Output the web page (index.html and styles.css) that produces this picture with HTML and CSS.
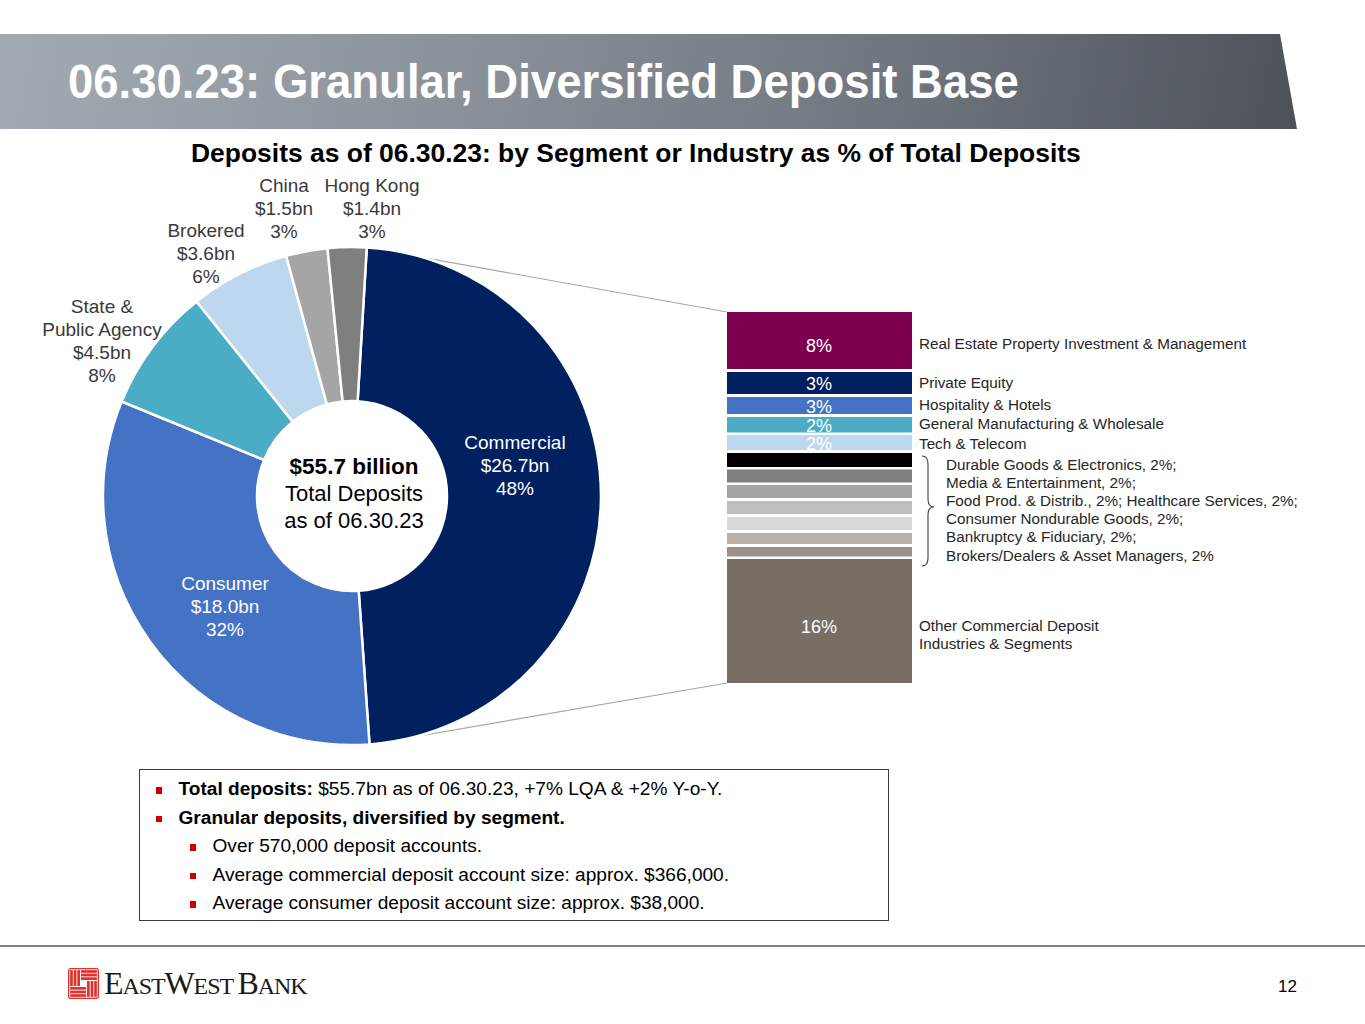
FILE: index.html
```html
<!DOCTYPE html>
<html lang="en">
<head>
<meta charset="utf-8">
<title>06.30.23: Granular, Diversified Deposit Base</title>
<link rel="stylesheet" href="styles.css">
</head>
<body>
<div class="slide">
  <header class="titlebar">
    <h1 class="title">06.30.23: Granular, Diversified Deposit Base</h1>
  </header>
  <h2 class="subtitle">Deposits as of 06.30.23: by Segment or Industry as % of Total Deposits</h2>

  <svg class="chart" width="1365" height="592" viewBox="0 169 1365 592" xmlns="http://www.w3.org/2000/svg">
    <!-- connectors -->
    <line class="conn" x1="367" y1="247.5" x2="727" y2="312"/>
    <line class="conn" x1="369.5" y1="744.5" x2="727" y2="683"/>

    <!-- donut -->
    <g class="donut">
      <path fill="#002060" d="M 366.77 247.44 A 249 249 0 0 1 369.50 744.38 L 358.68 590.77 A 95 95 0 0 0 357.63 401.17 Z"/>
      <path fill="#4472C4" d="M 369.50 744.38 A 249 249 0 0 1 121.63 401.47 L 264.11 459.94 A 95 95 0 0 0 358.68 590.77 Z"/>
      <path fill="#4BACC6" d="M 121.63 401.47 A 249 249 0 0 1 196.60 301.45 L 292.71 421.77 A 95 95 0 0 0 264.11 459.94 Z"/>
      <path fill="#BDD7EE" d="M 196.60 301.45 A 249 249 0 0 1 286.13 255.87 L 326.87 404.38 A 95 95 0 0 0 292.71 421.77 Z"/>
      <path fill="#A5A5A5" d="M 286.13 255.87 A 249 249 0 0 1 327.49 248.21 L 342.65 401.46 A 95 95 0 0 0 326.87 404.38 Z"/>
      <path fill="#7F7F7F" d="M 327.49 248.21 A 249 249 0 0 1 366.77 247.44 L 357.63 401.17 A 95 95 0 0 0 342.65 401.46 Z"/>
    </g>

    <!-- donut outer labels -->
    <g class="lbl-out">
      <text x="284" y="192">China</text>
      <text x="284" y="215">$1.5bn</text>
      <text x="284" y="238">3%</text>
      <text x="372" y="192">Hong Kong</text>
      <text x="372" y="215">$1.4bn</text>
      <text x="372" y="238">3%</text>
      <text x="206" y="237">Brokered</text>
      <text x="206" y="260">$3.6bn</text>
      <text x="206" y="283">6%</text>
      <text x="102" y="313">State &amp;</text>
      <text x="102" y="336">Public Agency</text>
      <text x="102" y="359">$4.5bn</text>
      <text x="102" y="382">8%</text>
    </g>
    <g class="lbl-in">
      <text x="515" y="449">Commercial</text>
      <text x="515" y="472">$26.7bn</text>
      <text x="515" y="495">48%</text>
      <text x="225" y="590">Consumer</text>
      <text x="225" y="613">$18.0bn</text>
      <text x="225" y="636">32%</text>
    </g>
    <g class="lbl-center">
      <text class="b" x="354" y="474">$55.7 billion</text>
      <text x="354" y="501">Total Deposits</text>
      <text x="354" y="528">as of 06.30.23</text>
    </g>

    <!-- stacked bar -->
    <g class="bar">
      <rect x="727" y="312" width="185" height="57" fill="#7D0050"/>
      <rect x="727" y="372" width="185" height="22" fill="#002060"/>
      <rect x="727" y="397" width="185" height="17" fill="#4472C4"/>
      <rect x="727" y="417" width="185" height="15.5" fill="#4BACC6"/>
      <rect x="727" y="435" width="185" height="15" fill="#BDD7EE"/>
      <rect x="727" y="453" width="185" height="14" fill="#000000"/>
      <rect x="727" y="469.5" width="185" height="13" fill="#7F7F7F"/>
      <rect x="727" y="485" width="185" height="13" fill="#A5A5A5"/>
      <rect x="727" y="501" width="185" height="13" fill="#BFBFBF"/>
      <rect x="727" y="517" width="185" height="13" fill="#D9D9D9"/>
      <rect x="727" y="533" width="185" height="11" fill="#B8B0A9"/>
      <rect x="727" y="547" width="185" height="9.5" fill="#9C9188"/>
      <rect x="727" y="559" width="185" height="124" fill="#776E64"/>
    </g>
    <g class="lbl-bar">
      <text x="819" y="351.5">8%</text>
      <text x="819" y="389.5">3%</text>
      <text x="819" y="412.5">3%</text>
      <text x="819" y="431.5">2%</text>
      <text x="819" y="449.5">2%</text>
      <text x="819" y="632.5">16%</text>
    </g>
    <g class="lbl-ind">
      <text x="919" y="349.4">Real Estate Property Investment &amp; Management</text>
      <text x="919" y="388.4">Private Equity</text>
      <text x="919" y="410.4">Hospitality &amp; Hotels</text>
      <text x="919" y="429.4">General Manufacturing &amp; Wholesale</text>
      <text x="919" y="449.4">Tech &amp; Telecom</text>
      <text x="946" y="470.4">Durable Goods &amp; Electronics, 2%;</text>
      <text x="946" y="488.4">Media &amp; Entertainment, 2%;</text>
      <text x="946" y="506.4">Food Prod. &amp; Distrib., 2%; Healthcare Services, 2%;</text>
      <text x="946" y="524.4">Consumer Nondurable Goods, 2%;</text>
      <text x="946" y="542.4">Bankruptcy &amp; Fiduciary, 2%;</text>
      <text x="946" y="561.4">Brokers/Dealers &amp; Asset Managers, 2%</text>
      <text x="919" y="631.4">Other Commercial Deposit</text>
      <text x="919" y="649.4">Industries &amp; Segments</text>
    </g>
    <path class="brace" d="M 922 456 Q 928 456 928 464 L 928 499 Q 928 507 934 507 Q 928 507 928 515 L 928 558 Q 928 566 922 566"/>
  </svg>

  <div class="notes">
    <ul class="list">
      <li class="l1"><span class="t"><b>Total deposits:</b> $55.7bn as of 06.30.23, +7% LQA &amp; +2% Y-o-Y.</span></li>
      <li class="l1"><span class="t"><b>Granular deposits, diversified by segment.</b></span></li>
      <li class="l2"><span class="t">Over 570,000 deposit accounts.</span></li>
      <li class="l2"><span class="t">Average commercial deposit account size: approx. $366,000.</span></li>
      <li class="l2"><span class="t">Average consumer deposit account size: approx. $38,000.</span></li>
    </ul>
  </div>

  <footer class="footer">
    <div class="brand">
      <svg class="logo" width="31" height="31" viewBox="0 0 32 32" xmlns="http://www.w3.org/2000/svg">
        <rect x="0" y="0" width="32" height="32" rx="3" fill="#E0302C"/>
        <rect x="1.3" y="1.3" width="29.4" height="29.4" rx="1.5" fill="#ffffff"/>
        <g fill="#E0302C">
          <rect x="2.2" y="2.2" width="2.8" height="16.4"/>
          <rect x="5.9" y="2.2" width="2.8" height="16.4"/>
          <rect x="9.6" y="2.2" width="2.8" height="16.4"/>
          <rect x="13.4" y="2.2" width="16.4" height="2.8"/>
          <rect x="13.4" y="5.9" width="16.4" height="2.8"/>
          <rect x="13.4" y="9.6" width="16.4" height="2.8"/>
          <rect x="19.6" y="13.4" width="2.8" height="16.4"/>
          <rect x="23.3" y="13.4" width="2.8" height="16.4"/>
          <rect x="27" y="13.4" width="2.8" height="16.4"/>
          <rect x="2.2" y="19.6" width="16.4" height="2.8"/>
          <rect x="2.2" y="23.3" width="16.4" height="2.8"/>
          <rect x="2.2" y="27" width="16.4" height="2.8"/>
        </g>
      </svg>
      <span class="wordmark"><span class="big">E</span>AST<span class="big">W</span>EST <span class="big">B</span>ANK</span>
    </div>
    <div class="pagenum">12</div>
  </footer>
</div>
</body>
</html>
```

FILE: styles.css
```css
* { box-sizing: border-box; }

html, body {
  margin: 0;
  padding: 0;
  background: #ffffff;
}

body {
  font-family: "Liberation Sans", Arial, Helvetica, sans-serif;
  color: #000;
}

.slide {
  width: 1365px;
  height: 1024px;
  overflow: hidden;
  background: #ffffff;
}

/* ---------- title bar ---------- */
.titlebar {
  margin-top: 34px;
  width: 1297px;
  height: 95px;
  display: flex;
  align-items: center;
  padding-left: 68px;
  background: linear-gradient(100deg, #a2aab2 0%, #8b929a 35%, #6f757d 70%, #4d5259 100%);
  clip-path: polygon(0 0, 1280px 0, 1297px 100%, 0 100%);
}

.title {
  margin: 0;
  font-size: 45.5px;
  font-weight: bold;
  color: #ffffff;
  line-height: 1;
  white-space: nowrap;
  transform: scaleY(1.06);
}

.subtitle {
  margin: 9px 0 0;
  padding-left: 191px;
  height: 31px;
  font-size: 26.45px;
  line-height: 31px;
  font-weight: bold;
  color: #000;
  white-space: nowrap;
}

/* ---------- chart ---------- */
.chart {
  display: block;
  font-family: "Liberation Sans", Arial, Helvetica, sans-serif;
}

.conn {
  stroke: #a6a6a6;
  stroke-width: 1.2;
}

.donut path {
  stroke: #ffffff;
  stroke-width: 2.5;
  stroke-linejoin: round;
}

.lbl-out text {
  font-size: 19px;
  fill: #3a3a3a;
  text-anchor: middle;
}

.lbl-in text {
  font-size: 19px;
  fill: #ffffff;
  text-anchor: middle;
}

.lbl-center text {
  font-size: 22px;
  fill: #000;
  text-anchor: middle;
}

.lbl-center .b {
  font-weight: bold;
  font-size: 22.5px;
}

.lbl-bar text {
  font-size: 18px;
  fill: #ffffff;
  text-anchor: middle;
}

.lbl-ind text {
  font-size: 15.25px;
  fill: #262626;
}

.brace {
  fill: none;
  stroke: #404040;
  stroke-width: 1.1;
}

/* ---------- notes box ---------- */
.notes {
  margin: 8px 0 0 139px;
  width: 750px;
  height: 152px;
  border: 1.5px solid #3a3a3a;
  padding-top: 5px;
}

.list {
  list-style: none;
  margin: 0;
  padding: 0;
}

.list li {
  display: flex;
  align-items: center;
  height: 28.5px;
  font-size: 19.1px;
  color: #000;
  white-space: nowrap;
}

.list li::before {
  content: "";
  flex: none;
  width: 5.5px;
  height: 6.5px;
  background: #D00000;
  margin-right: 17px;
  margin-top: 2px;
}

.list .l1 { padding-left: 16px; }
.list .l2 { padding-left: 50px; }

/* ---------- footer ---------- */
.footer {
  margin-top: 24px;
  border-top: 2px solid #7f7f7f;
  padding: 18px 68px 0 68px;
  display: flex;
  justify-content: space-between;
  align-items: flex-start;
}

.brand {
  display: flex;
  align-items: center;
  gap: 5px;
}

.logo {
  display: block;
  flex: none;
}

.wordmark {
  font-family: "Liberation Serif", "Times New Roman", serif;
  font-size: 24px;
  letter-spacing: -1.1px;
  color: #1a1a1a;
  line-height: 31px;
  white-space: nowrap;
  padding-top: 3px;
}

.wordmark .big {
  font-size: 32px;
}

.pagenum {
  margin-top: 12px;
  font-size: 17px;
  line-height: 20px;
  color: #000;
}
```
